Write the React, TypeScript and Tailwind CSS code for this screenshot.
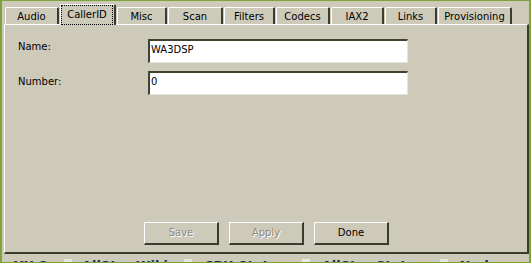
import React from "react"

const tabs = [
  { name: "Audio", w: "w-[54px]" },
  { name: "CallerID", w: "w-[56px]", active: true },
  { name: "Misc", w: "w-[50px]" },
  { name: "Scan", w: "w-[55px]" },
  { name: "Filters", w: "w-[51px]" },
  { name: "Codecs", w: "w-[54px]" },
  { name: "IAX2", w: "w-[53px]" },
  { name: "Links", w: "w-[52px]" },
  { name: "Provisioning", w: "w-[74px]" },
]

const font = "font-['DejaVu_Sans',Verdana,sans-serif] text-[10px] leading-[12px]"

const App = () => {
  return (
    <div className={`w-[531px] h-[263px] overflow-hidden bg-[#cecab9] border-t border-b border-x-2 border-[#7fa33b] flex flex-col ${font} text-black`}>
      {/* tab strip */}
      <div className="mt-[3px] ml-[3px] h-[20px] flex items-end gap-[1px]">
        {tabs.map((t) =>
          t.active ? (
            <div key={t.name} className={`${t.w} h-[21px] -mb-[1px] relative z-10 bg-[#cecab9] border-t border-l border-white border-r-2 border-r-[#3a3d2d] rounded-t-[2px] flex`}>
              <div className="flex-1 mr-[1px] border border-dotted border-black flex justify-center pt-[3px]">
                <span>{t.name}</span>
              </div>
            </div>
          ) : (
            <div key={t.name} className={`${t.w} h-[17px] bg-[#cecab9] border-t border-l border-white border-r-2 border-r-[#3a3d2d] rounded-t-[2px] flex justify-center pt-[3px]`}>
              <span>{t.name}</span>
            </div>
          )
        )}
      </div>

      {/* panel */}
      <div className="ml-[2px] w-[525px] h-[230px] border-t border-l border-white border-r-2 border-b-2 border-r-[#3a3d2d] border-b-[#3a3d2d] flex flex-col">
        <div className="pt-[14px] pl-[13px] grid grid-cols-[130px_260px] gap-y-[8px]">
          <span className="pt-[2px]">Name:</span>
          <input
            readOnly
            defaultValue="WA3DSP"
            className={`h-[24px] w-[260px] bg-white border-t-2 border-l-2 border-t-[#3f4231] border-l-[#3f4231] border-b border-r border-b-[#e6e4da] border-r-[#e6e4da] pl-[1px] pb-[4px] outline-none ${font} text-black`}
          />
          <span className="pt-[5px]">Number:</span>
          <input
            readOnly
            defaultValue="0"
            className={`h-[24px] w-[260px] bg-white border-t-2 border-l-2 border-t-[#3f4231] border-l-[#3f4231] border-b border-r border-b-[#e6e4da] border-r-[#e6e4da] pl-[1px] pb-[4px] outline-none ${font} text-black`}
          />
        </div>

        <div className="mt-auto pb-[7px] pl-[139px] flex gap-[10px]">
          <DlgButton label="Save" disabled />
          <DlgButton label="Apply" disabled />
          <DlgButton label="Done" />
        </div>
      </div>

      {/* page behind the dialog, barely showing */}
      <div className="mt-[4px] h-[4px] overflow-hidden">
        <div className="flex items-start text-[13px] leading-[13px] font-bold text-[#1c2a55] whitespace-nowrap pt-[1px]">
          <span className="ml-[12px]">YU S</span>
          <span className="ml-[16px] w-[8px] h-[4px] bg-[#e8e6df]" />
          <span className="ml-[10px]">AllStar Wiki</span>
          <span className="ml-[16px] w-[8px] h-[4px] bg-[#e8e6df]" />
          <span className="ml-[12px]">CPU Status</span>
          <span className="ml-[16px] w-[8px] h-[4px] bg-[#e8e6df]" />
          <span className="ml-[12px]">AllStar Status</span>
          <span className="ml-[16px] w-[8px] h-[4px] bg-[#e8e6df]" />
          <span className="ml-[12px]">Node</span>
        </div>
      </div>
    </div>
  )
}

export default App

function DlgButton({ label, disabled }: { label: string; disabled?: boolean }) {
  return (
    <button
      className={`w-[75px] h-[23px] bg-[#cecab9] border-t border-l border-white border-r-2 border-b-2 border-r-[#3a3d2d] border-b-[#3a3d2d] flex items-center justify-center ${font} ${
        disabled ? "text-[#8c897c] [text-shadow:1px_1px_0_#ffffff]" : "text-black"
      }`}
    >
      {label}
    </button>
  )
}
